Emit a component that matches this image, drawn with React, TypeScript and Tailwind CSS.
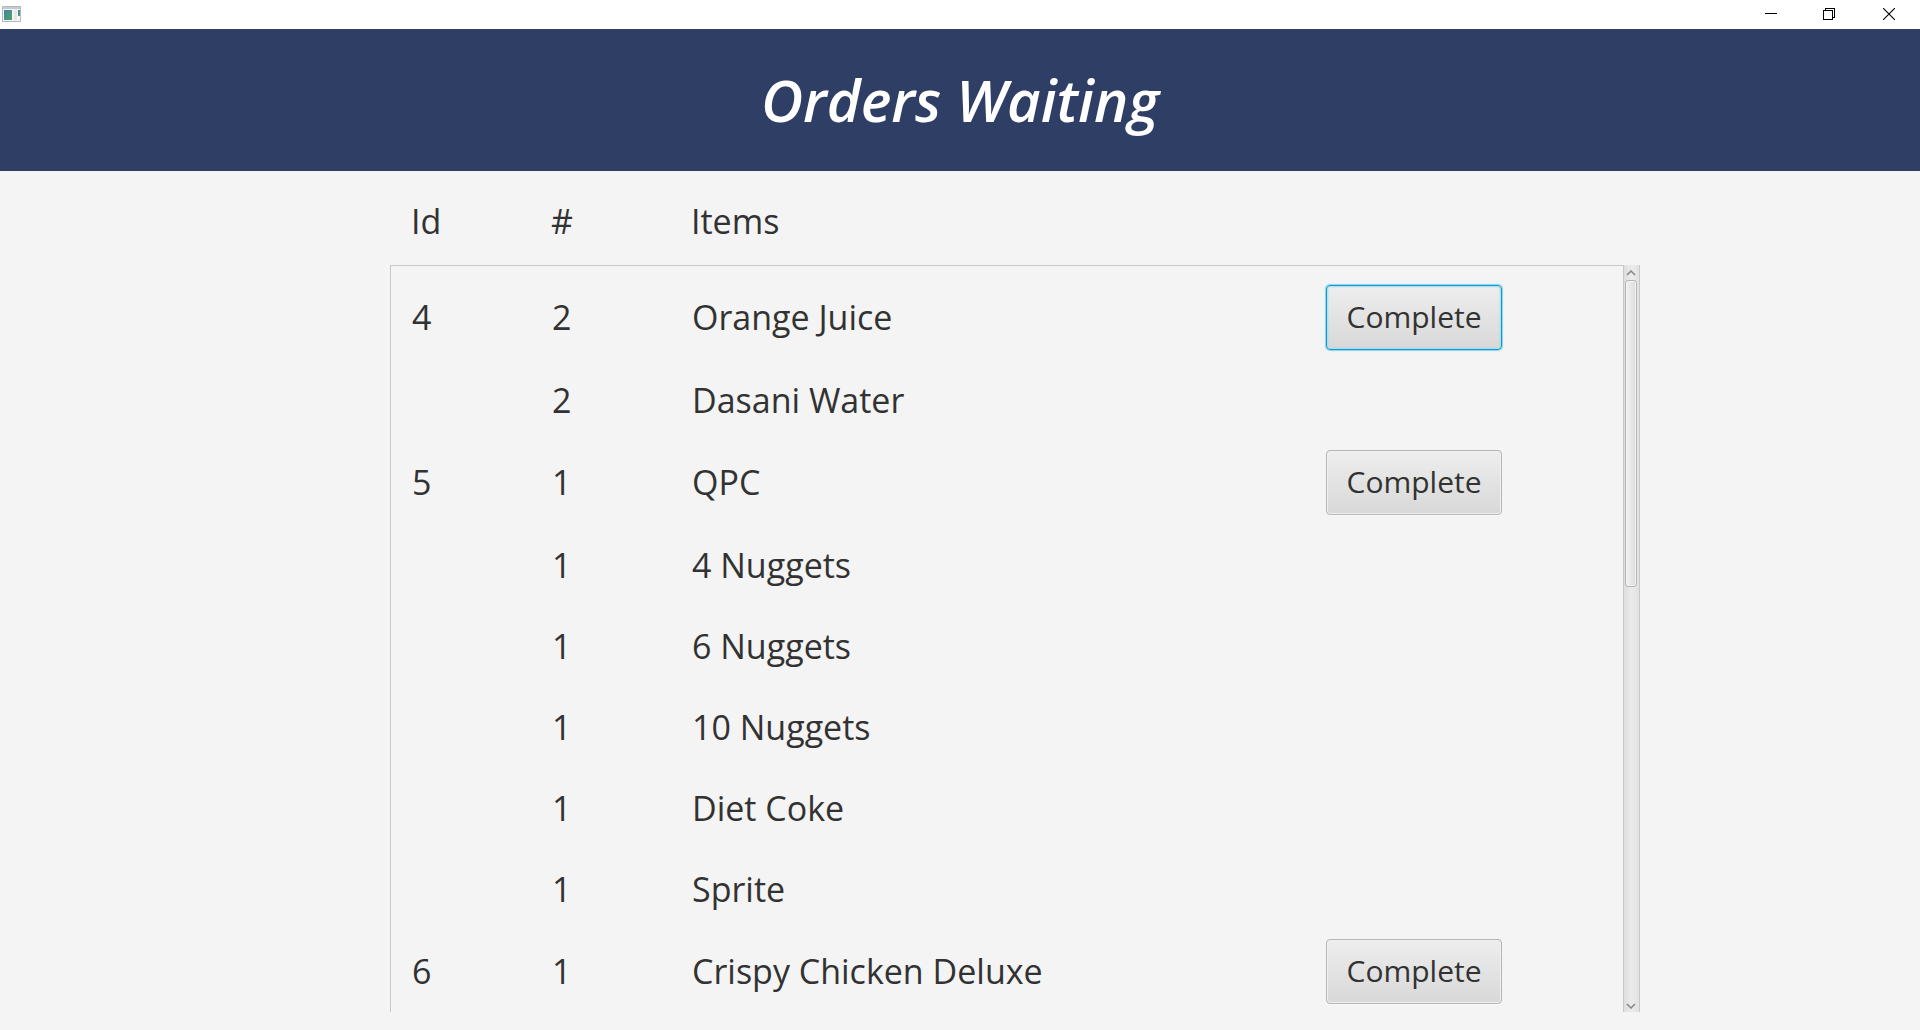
type Item = { quantity: number; name: string };
type Order = { id: number; items: Item[] };

const orders: Order[] = [
  {
    id: 4,
    items: [
      { quantity: 2, name: 'Orange Juice' },
      { quantity: 2, name: 'Dasani Water' },
    ],
  },
  {
    id: 5,
    items: [
      { quantity: 1, name: 'QPC' },
      { quantity: 1, name: '4 Nuggets' },
      { quantity: 1, name: '6 Nuggets' },
      { quantity: 1, name: '10 Nuggets' },
      { quantity: 1, name: 'Diet Coke' },
      { quantity: 1, name: 'Sprite' },
    ],
  },
  { id: 6, items: [{ quantity: 1, name: 'Crispy Chicken Deluxe' }] },
];

function TitleBar() {
  return (
    <div className="flex h-[29px] shrink-0 items-center justify-between bg-white">
      <svg className="ml-[2px]" width="20" height="17" viewBox="0 0 20 17" aria-hidden="true">
        <defs>
          <linearGradient id="pane" x1="0" y1="0" x2="1" y2="1">
            <stop offset="0" stopColor="#4a7fa8" />
            <stop offset="1" stopColor="#48a862" />
          </linearGradient>
        </defs>
        <rect x="0.5" y="0.5" width="18" height="15" fill="#f4f4f4" stroke="#b5b9bd" />
        <rect x="1" y="1" width="17" height="2" fill="#c3c9d0" />
        <rect x="2" y="4" width="8" height="10" fill="url(#pane)" />
        <rect x="12" y="4" width="3" height="10" fill="#e6e6e6" />
        <rect x="16" y="4" width="2" height="6" fill="url(#pane)" />
      </svg>
      <div className="flex h-full pb-px">
        <button aria-label="Minimize" className="flex w-[58px] items-center justify-center">
          <svg width="12" height="12" viewBox="0 0 12 12" shapeRendering="crispEdges">
            <path d="M0 5.5H12" stroke="#000" />
          </svg>
        </button>
        <button aria-label="Restore" className="flex w-[58px] items-center justify-center">
          <svg width="12" height="12" viewBox="0 0 12 12" fill="none" stroke="#000" shapeRendering="crispEdges">
            <rect x="0.5" y="2.5" width="9" height="9" />
            <path d="M2.5 2.5V0.5H11.5V9.5H9.5" />
          </svg>
        </button>
        <button aria-label="Close" className="flex w-[62px] items-center justify-center">
          <svg width="12" height="12" viewBox="0 0 12 12" fill="none" stroke="#000" strokeWidth="1.1">
            <path d="M0 0L12 12M12 0L0 12" />
          </svg>
        </button>
      </div>
    </div>
  );
}

function CompleteButton({ order, focused }: { order: number; focused: boolean }) {
  const look = focused
    ? 'border-[#039ed3] shadow-[0_0_1px_1px_#8fd3ea,inset_0_0_2px_1px_#a5d9ea]'
    : 'border-[#b5b5b5] shadow-[0_1px_0_#fafafa,inset_0_0_0_1px_#f0f0f0]';
  return (
    <button
      aria-label={`Complete order ${order}`}
      className={`h-[65px] w-[176px] rounded-[4px] border bg-linear-to-b from-[#eeeeee] to-[#d8d8d8] text-[30px] leading-[40px] ${look}`}
    >
      Complete
    </button>
  );
}

function ScrollBar() {
  return (
    <div className="flex flex-col items-center border-x border-[#c8c8c8] bg-linear-to-r from-[#dedede] via-[#ebebeb] to-[#e2e2e2]">
      <button aria-label="Scroll up" className="flex h-[15px] w-full shrink-0 items-center justify-center pr-px">
        <svg width="10" height="6" viewBox="0 0 10 6" fill="none" stroke="#858585" strokeWidth="1.5">
          <path d="M1 5L5 1L9 5" />
        </svg>
      </button>
      <div className="flex min-h-0 w-full flex-1 flex-col items-center pr-px">
        <div className="w-[12px] flex-[17] rounded-[3px] border border-[#b4b4b4] bg-linear-to-r from-[#f2f2f2] to-[#dcdcdc] shadow-[inset_0_0_0_1px_#f4f4f4]" />
        <div className="flex-[23]" />
      </div>
      <button aria-label="Scroll down" className="flex h-[13px] w-full shrink-0 items-center justify-center pr-px">
        <svg width="10" height="6" viewBox="0 0 10 6" fill="none" stroke="#858585" strokeWidth="1.5">
          <path d="M1 1L5 5L9 1" />
        </svg>
      </button>
    </div>
  );
}

const columns = 'grid grid-cols-[140px_140px_634px_1fr] items-center';

export default function App() {
  return (
    <div className="flex h-screen flex-col overflow-hidden bg-[#f4f4f4] font-['Open_Sans','Noto_Sans',sans-serif] text-[#323232]">
      <TitleBar />
      <header className="flex h-[142px] shrink-0 items-center justify-center bg-[#2f3e65]">
        <h1 className="text-[58px] leading-[72px] font-semibold text-white italic">Orders Waiting</h1>
      </header>
      <main className="flex min-h-0 flex-1 pb-[18px]">
        <div className="flex-[39]" />
        <div className="grid w-[1250px] grid-cols-[1fr_17px] grid-rows-[94px_minmax(0,1fr)]">
          <table className="contents text-[34px] leading-[48px]">
            <thead className="col-span-2 block pt-[9px] pl-[21px]">
              <tr className={`h-[81px] text-left ${columns}`}>
                <th className="font-normal">Id</th>
                <th className="font-normal">#</th>
                <th className="font-normal">Items</th>
                <th aria-label="Action" />
              </tr>
            </thead>
            <tbody className="block overflow-hidden border-t border-l border-[#c8c8c8] pt-[9px] pl-[21px]">
              {orders.map((order, orderIndex) =>
                order.items.map((item, index) => (
                  <tr key={`${order.id}-${item.name}`} className={`${columns} ${index === 0 ? 'h-[84px]' : 'h-[81px]'}`}>
                    <td>{index === 0 ? order.id : null}</td>
                    <td>{item.quantity}</td>
                    <td>{item.name}</td>
                    <td>{index === 0 && <CompleteButton order={order.id} focused={orderIndex === 0} />}</td>
                  </tr>
                )),
              )}
            </tbody>
          </table>
          <ScrollBar />
        </div>
        <div className="flex-[28]" />
      </main>
    </div>
  );
}
